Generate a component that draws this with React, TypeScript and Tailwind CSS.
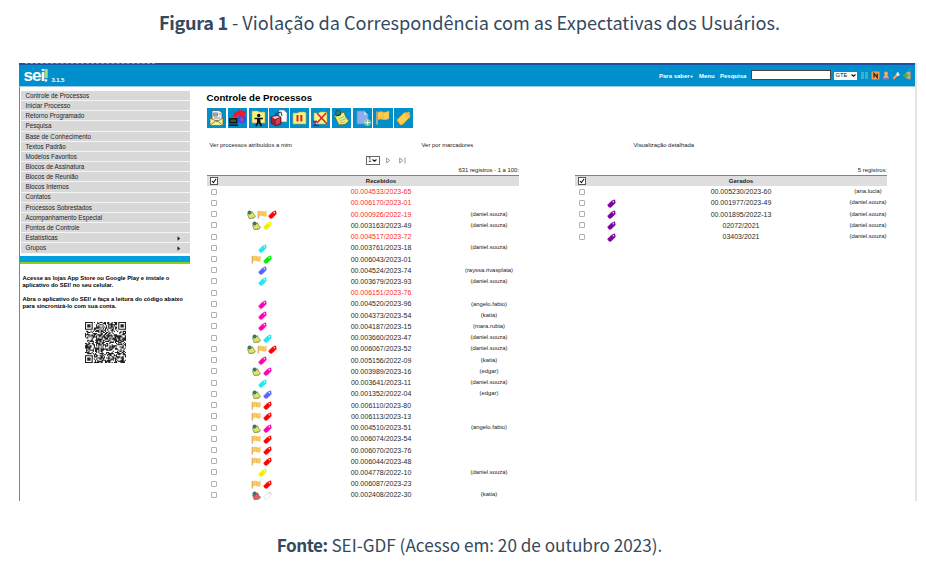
import React from "react";

type Row = { n: string; red?: boolean; icons?: string[]; user?: string };

const PINK = "#ff00b4";
const RED = "#ff0000";
const CYAN = "#22e6f2";
const BLUE = "#5a62ff";
const YELLOW = "#f4f000";
const GREEN = "#00f000";
const PURPLE = "#7d00a0";

const received: Row[] = [
  { n: "00.004533/2023-65", red: true },
  { n: "00.006170/2023-01", red: true },
  { n: "00.000926/2022-19", red: true, icons: ["note", "flag", RED], user: "daniel.souza" },
  { n: "00.003163/2023-49", icons: ["note", YELLOW], user: "daniel.souza" },
  { n: "00.004517/2023-72", red: true },
  { n: "00.003761/2023-18", icons: [CYAN], user: "daniel.souza" },
  { n: "00.006043/2023-01", icons: ["flag", GREEN] },
  { n: "00.004524/2023-74", icons: [BLUE], user: "rayssa.rivasplata" },
  { n: "00.003679/2023-93", icons: [CYAN], user: "daniel.souza" },
  { n: "00.006151/2023-76", red: true },
  { n: "00.004520/2023-96", icons: [PINK], user: "angelo.fabio" },
  { n: "00.004373/2023-54", icons: [PINK], user: "katia" },
  { n: "00.004187/2023-15", icons: [PINK], user: "mara.rubia" },
  { n: "00.003660/2023-47", icons: ["note", CYAN], user: "daniel.souza" },
  { n: "00.006067/2023-52", icons: ["note", "flag", RED], user: "daniel.souza" },
  { n: "00.005156/2022-09", icons: [PINK], user: "katia" },
  { n: "00.003989/2023-16", icons: ["note", PINK], user: "edgar" },
  { n: "00.003641/2023-11", icons: [CYAN], user: "daniel.souza" },
  { n: "00.001352/2022-04", icons: ["note", BLUE], user: "edgar" },
  { n: "00.006110/2023-80", icons: ["flag", RED] },
  { n: "00.006113/2023-13", icons: ["flag", RED] },
  { n: "00.004510/2023-51", icons: ["note", PINK], user: "angelo.fabio" },
  { n: "00.006074/2023-54", icons: ["flag", RED] },
  { n: "00.006070/2023-76", icons: ["flag", RED] },
  { n: "00.006044/2023-48", icons: ["flag", RED] },
  { n: "00.004778/2022-10", icons: [YELLOW], user: "daniel.souza" },
  { n: "00.006087/2023-23", icons: ["flag", RED] },
  { n: "00.002408/2022-30", icons: ["rednote", "#ffffff"], user: "katia" },
];

const generated: Row[] = [
  { n: "00.005230/2023-60", user: "ana.lucia" },
  { n: "00.001977/2023-49", icons: [PURPLE], user: "daniel.souza" },
  { n: "00.001895/2022-13", icons: [PURPLE], user: "daniel.souza" },
  { n: "02072/2021", icons: [PURPLE], user: "daniel.souza" },
  { n: "03403/2021", icons: [PURPLE], user: "daniel.souza" },
];

const menu = [
  "Controle de Processos", "Iniciar Processo", "Retorno Programado", "Pesquisa",
  "Base de Conhecimento", "Textos Padrão", "Modelos Favoritos", "Blocos de Assinatura",
  "Blocos de Reunião", "Blocos Internos", "Contatos", "Processos Sobrestados",
  "Acompanhamento Especial", "Pontos de Controle", "Estatísticas", "Grupos",
];

function RowIcon({ kind }: { kind: string }) {
  if (kind === "note" || kind === "rednote") {
    const fill = kind === "note" ? "#dbe66a" : "#e85a68";
    return (
      <svg className="h-[9px] w-[10.6px]" viewBox="0 0 21 18">
        <path d="m3 8 10-4.500q2 6 6 9l-3 3.500q-5 1.500-10 1Z" fill={fill} stroke="#66662c" strokeWidth="1.200" strokeLinejoin="round" />
        <path d="M9 15.500q5 .5 8-2" fill="none" stroke="#a5a53c" strokeWidth="1" />
        <ellipse cx="7" cy="5" rx="3.600" ry="3.400" fill="#3f7d68" stroke="#23493c" strokeWidth=".8" />
      </svg>
    );
  }
  if (kind === "flag") {
    return (
      <svg className="h-[9px] w-[10.6px]" viewBox="0 0 21 18">
        <path d="M2.500 2v15" stroke="#d9a55c" strokeWidth="2.500" />
        <path d="M3.500 3q4-2 8 0t7-1v9.500q-3 2-7 0t-8 1Z" fill="#fcce58" stroke="#ecb75a" />
        <path d="M11.500 3v9" stroke="#e8ad48" />
      </svg>
    );
  }
  const white = kind === "#ffffff";
  return (
    <svg className="h-[9px] w-[10.6px]" viewBox="0 0 21 18">
      <path d="M3 12 11 4l6.500-2.500L18.500 8 10 16.500H6Z" fill={kind} stroke={white ? "#c4c4c4" : kind} strokeLinejoin="round" />
      <circle cx="14.500" cy="5.500" r="1.500" fill="white" stroke={white ? "#c4c4c4" : "none"} />
    </svg>
  );
}

function Check({ on }: { on?: boolean }) {
  return on ? (
    <span className="flex h-[8px] w-[8.5px] items-center justify-center border border-[#555] bg-white">
      <svg className="h-[6px] w-[6px]" viewBox="0 0 6 6"><path d="m1 3 1.400 1.600L5 1" fill="none" stroke="#111" strokeWidth="1.100" /></svg>
    </span>
  ) : (
    <span className="h-[6px] w-[6.5px] rounded-[1px] border border-[#b0b0b0] bg-white" />
  );
}

function ProcessTable({ title, rows, right }: { title: string; rows: Row[]; right?: boolean }) {
  const cols = right ? "grid-cols-[15px_44px_215px_39px]" : "grid-cols-[15px_81px_157px_59px]";
  return (
    <div className="w-[312.5px]">
      <div className={`grid h-[11px] items-center border-t border-[#6c9a3c] bg-[#dedede] ${cols}`}>
        <span className="flex justify-center"><Check on /></span>
        <span />
        <b className="text-center text-[6px] leading-none text-[#222]">{title}</b>
        <span />
      </div>
      {rows.map((r) => (
        <div key={r.n} className={`grid h-[11.24px] items-center ${cols}`}>
          <span className="flex justify-center"><Check /></span>
          <span className="flex justify-center pt-px">{r.icons?.map((k) => <RowIcon key={k} kind={k} />)}</span>
          <span className={`text-center text-[7px] leading-none ${r.red ? "text-[#ff2a2a]" : "text-[#2a2a2a]"}`}>{r.n}</span>
          <span className="pt-[1px] text-center text-[5.9px] leading-none whitespace-nowrap text-[#1c1c1c]">{r.user ? `(${r.user})` : ""}</span>
        </div>
      ))}
    </div>
  );
}

const folder = <path d="M3 5h5l1-1h6l1 1v11H3Z" fill="#f7f283" stroke="#b6a93e" strokeWidth=".6" />;

const tools: React.ReactNode[] = [
  <g key="mail">
    <path d="M5 2.500h7l3 2V13H5Z" fill="#ececec" stroke="#555" strokeWidth=".7" />
    <path d="M6.500 5h4v3h-4ZM7 10h6M12 6h2" fill="#aaa" stroke="#777" strokeWidth=".7" />
    <path d="M3 10v7.500h13V10l-6 3.500Z" fill="#f5ed91" stroke="#6b6435" strokeWidth=".7" />
    <path d="m3 17.500 6-5h1l6 5" fill="none" stroke="#6b6435" strokeWidth=".7" />
  </g>,
  <g key="send">
    <circle cx="14" cy="11" r="4" fill="#4a43d6" /><path d="m11 11 3-3 2 4-2 3Z" fill="#8a46c8" />
    <path d="M1 10h8.500v5.500H1ZM1 16.500h9V18H1Z" fill="#151515" /><path d="M2.500 11.500H8V14H2.500Z" fill="#3d5a28" />
    <path d="M5 9q0-5 6-6l-1-1.500 8 2-3 6.500-1.500-3q-4 0-5 2Z" fill="#f41624" />
  </g>,
  <g key="user">
    <path d="M3 3h6l1 1h6v11H3Z" fill="#f7f283" stroke="#b6a93e" strokeWidth=".6" />
    <circle cx="9.700" cy="7.500" r="1.700" fill="#111" />
    <path d="M5.500 10.500h8.500M9.700 10v3.500M9.700 13 7 18M9.700 13l2.800 5" stroke="#111" strokeWidth="1.700" />
    <path d="M8 10h3.400v4H8Z" fill="#111" />
  </g>,
  <g key="book">
    <path d="M10 2h5l3 3v9h-8Z" fill="#fff" stroke="#777" strokeWidth=".6" />
    <path d="m2 9 6-2 4 2v7l-5 2-5-3Z" fill="#9f2035" stroke="#5b1020" strokeWidth=".7" />
    <path d="m3 9 5-1 3 1-5 2Z" fill="#f1c9c9" /><path d="m7 12 4-2v5l-4 2Z" fill="#d23f52" /><path d="m6 6 6-2 1 4" fill="none" stroke="#333" />
  </g>,
  <g key="pause">{folder}<path d="M7.500 7v6.500M11.300 7v6.500" stroke="#e3201a" strokeWidth="2" /></g>,
  <g key="remove">{folder}<path d="m6 5 10 11M15 5 6 15" stroke="#d3202b" strokeWidth="1.400" /><path d="M2 13.500h4M2 17.500h6M4 13.500v4" stroke="#4030a0" strokeWidth="1.500" /></g>,
  <g key="note">
    <path d="m2.500 8 9.500-4q1 5 5 9l-4 3.500-6 .5Z" fill="#e5ef7d" stroke="#62672e" strokeWidth=".8" strokeLinejoin="round" />
    <path d="m7 11 5-2.500M8 13l6-2.500M8 15l5-1" stroke="#a1a650" strokeWidth=".7" />
    <ellipse cx="6" cy="5" rx="2.500" ry="2.800" fill="#2c8177" stroke="#174d49" strokeWidth=".9" /><path d="m4 8 5-1.500" stroke="#173e38" />
  </g>,
  <g key="doc">
    <path d="M4 3h7l4 4v9H4Z" fill="#8caee9" stroke="#638bd0" strokeWidth=".7" /><path d="M11 3v4h4" fill="#c3d6f5" />
    <circle cx="14.500" cy="14.500" r="3" fill="#67c66b" stroke="#fff" strokeWidth=".4" /><path d="M14.500 12.500v4M12.500 14.500h4" stroke="#fff" />
  </g>,
  <g key="flag">
    <path d="M4 3.500v13" stroke="#e6b069" strokeWidth="1.500" /><path d="M5 4.500q3-1.500 5-.5t6-1v7.500q-3 2-6 1t-5 .5Z" fill="#fccf4d" stroke="#e9a733" strokeWidth=".5" />
    <path d="M10 4v7" stroke="#eab449" />
  </g>,
  <g key="tag"><path d="m2.800 12 7-7 5.700-1 .500 5-7.500 7.500-2 .5Z" fill="#ffcf4b" stroke="#e3a02b" strokeWidth=".6" /><circle cx="13.400" cy="6.200" r="1" fill="#fff" stroke="#ad782c" strokeWidth=".6" /></g>,
];

function finder(x: number, y: number, ox: number, oy: number) {
  const a = x - ox;
  const b = y - oy;
  if (a < -1 || b < -1 || a > 7 || b > 7) return null;
  if (a < 0 || b < 0 || a > 6 || b > 6) return false;
  return a === 0 || b === 0 || a === 6 || b === 6 || (a > 1 && a < 5 && b > 1 && b < 5);
}

function QrCode() {
  const N = 37;
  let d = "";
  let seed = 91;
  for (let y = 0; y < N; y++) {
    for (let x = 0; x < N; x++) {
      seed = (seed * 1103515245 + 12345) % 2147483648;
      const f = finder(x, y, 0, 0) ?? finder(x, y, N - 7, 0) ?? finder(x, y, 0, N - 7);
      if (f ?? seed / 2147483648 > 0.47) d += `M${x} ${y}h1v1h-1z`;
    }
  }
  return <svg className="size-[41px]" viewBox="0 0 37 37"><path d={d} fill="#222" /></svg>;
}

function Select({ label, className }: { label: string; className: string }) {
  return (
    <span className={`flex shrink-0 items-center justify-between bg-white px-[1.500px] leading-none text-[#222] ${className}`}>
      {label}
      <svg className="h-[3px] w-[5px]" viewBox="0 0 5 3"><path d="m.5.5 2 1.700 2-1.700" fill="none" stroke="#111" strokeWidth="1.100" /></svg>
    </span>
  );
}

function TopBar() {
  return (
    <header className="h-[24px] border-b border-[#9fc9df] bg-[#008fcd]">
      <div className="h-[2px] bg-[#1d4fa3]"><div className="ml-[6px] w-[130px] border-t border-dashed border-[#7d97c8]" /></div>
      <div className="flex h-[21px] items-center text-white">
        <span className="ml-[4.500px] flex w-[28px] items-start">
          <b className="text-[17px] leading-[19px] font-bold tracking-[-0.9px]">sei</b>
          <svg className="mt-[3px] h-[13px] w-[4px]" viewBox="0 0 4 13"><path d="M.5 0h3.200v9H.5Z" fill="#a5dc8c" /><path d="M.8 10.300h2.400v2.200H.8Z" fill="#fff" /></svg>
        </span>
        <b className="mt-[9px] text-[6px] leading-none tracking-[-0.100px]">3.1.5</b>
        <nav className="ml-auto flex items-center gap-[4px] pt-px text-[6px] leading-none font-bold">
          <span className="w-[36px] whitespace-nowrap">Para saber+</span>
          <span className="w-[17px]">Menu</span>
          <span className="w-[28px]">Pesquisa</span>
        </nav>
        <span className="mb-[2px] ml-[3px] h-[10px] w-[80px] border border-[#444] bg-white" />
        <Select label="GTE" className="ml-[3px] h-[8px] w-[23px] text-[5.800px]" />
        <span className="mr-[4px] ml-[3px] flex items-center gap-[1.500px]">
          <svg className="size-[9px]" viewBox="0 0 9 9"><path d="M1 1h3v7H1ZM5 1h3v7H5Z" fill="#39b0cf" /></svg>
          <svg className="size-[9px]" viewBox="0 0 9 9"><rect x=".5" y=".5" width="8" height="8" rx="1" fill="#f19b52" /><path d="M3 6.500v-4l3.200 4v-4" fill="none" stroke="#222" strokeWidth="1.200" /></svg>
          <svg className="size-[9px]" viewBox="0 0 9 9"><circle cx="5" cy="2.500" r="1.900" fill="#f3b54b" /><path d="M2 7q1-3 3-3t3 3l-1 1H3Z" fill="#e8c088" /><path d="M1.500 6.500H8V8.500H1.500Z" fill="#8376c8" /></svg>
          <svg className="size-[9px]" viewBox="0 0 9 9"><path d="m1.300 7.700 4-4" stroke="#f3a35f" strokeWidth="2.200" /><path d="M4.500 4V2l2-1.500v2L8 3.300 6.500 5H5Z" fill="#f2eee5" /></svg>
          <svg className="size-[9px]" viewBox="0 0 9 9"><path d="M4.500 1 8.500.5v8l-4-1Z" fill="#d2ab63" /><path d="m.8 4.500 3.200-3v2h2.500v2H4v2Z" fill="#54a844" /></svg>
        </span>
      </div>
    </header>
  );
}

function Sidebar() {
  return (
    <aside className="w-[170.5px] shrink-0 border-l border-[#2d9fd0] text-[#222]">
      <ul className="pt-[4px] pl-px">
        {menu.map((m, i) => (
          <li key={m} className="flex h-[10.17px] items-center justify-between border-b border-[#f4f4f4] bg-[#d8d8d8] pt-[1px] pr-[9px] pl-[4.500px] text-[6.3px] leading-none">
            {m}
            {i > 13 && <svg className="h-[5px] w-[4px]" viewBox="0 0 4 5"><path d="M.5.300 3.200 2.500.5 4.700Z" fill="#222" /></svg>}
          </li>
        ))}
      </ul>
      <div className="mt-[2.300px] h-[8px] border-b-2 border-[#8bce1f] bg-[#00a0dd]" />
      <div className="pt-[11px] pl-[2.500px] text-[5.83px] leading-[7px] font-bold whitespace-nowrap text-black">
        <p>Acesse as lojas App Store ou Google Play e instale o<br />aplicativo do SEI! no seu celular.</p>
        <p className="mt-[7px]">Abra o aplicativo do SEI! e faça a leitura do código abaixo<br />para sincronizá-lo com sua conta.</p>
      </div>
      <div className="mt-[12px] ml-[65px]"><QrCode /></div>
    </aside>
  );
}

export default function App() {
  return (
    <main className="h-[569px] w-[926px] overflow-hidden bg-white font-['Liberation_Sans',Arial,sans-serif]">
      <h2 className="flex h-[63px] justify-center pt-[8px] pl-[13px] font-['Noto_Sans_CJK_SC',sans-serif] text-[18.15px] leading-[29px] whitespace-pre text-[#34495e]">
        <b className="tracking-[-0.300px]">Figura 1</b> - Violação da Correspondência com as Expectativas dos Usuários.
      </h2>
      <section className="ml-[19px] h-[438px] w-[898px] overflow-hidden border-r-2 border-[#e4e4e4]">
        <TopBar />
        <div className="flex">
          <Sidebar />
          <div className="ml-[17px] w-[690px]">
            <h1 className="h-[21px] pt-[5px] text-[9.7px] leading-[12px] font-bold text-black">Controle de Processos</h1>
            <div className="flex gap-[1.500px] pl-[0.500px]">
              {tools.map((t, i) => (
                <span key={i} className="h-[20px] w-[19.3px] bg-[#008fcd]"><svg className="h-[20px] w-[19.3px]" viewBox="0 0 19.300 20" fill="none">{t}</svg></span>
              ))}
            </div>
            <div className="flex h-[26px] pt-[13.500px] pl-[3px] text-[5.900px] leading-[7px] text-[#222]">
              <span className="w-[212px]">Ver processos atribuídos a mim</span>
              <span className="w-[212px]">Ver por marcadores</span>
              <span>Visualização detalhada</span>
            </div>
            <div className="flex h-[12px] items-center pl-[159px]">
              <Select label="1" className="h-[9px] w-[14px] border border-[#666] text-[6.500px]" />
              <svg className="ml-[6px] h-[7px] w-[5px]" viewBox="0 0 5 7"><path d="M.7 1v5l3-2.500Z" fill="none" stroke="#999" /></svg>
              <svg className="ml-[8px] h-[7px] w-[7px]" viewBox="0 0 7 7"><path d="M.7 1v5l3-2.500ZM6 .5v6" fill="none" stroke="#999" /></svg>
            </div>
            <div className="flex h-[9px] items-end pb-[1px] text-[5.900px] leading-[7px] text-[#222]">
              <span className="w-[312.5px] text-right">631 registros - 1 a 100:</span>
              <span className="w-[368px] text-right">5 registros:</span>
            </div>
            <div className="flex items-start gap-[55.5px]">
              <ProcessTable title="Recebidos" rows={received} />
              <ProcessTable title="Gerados" rows={generated} right />
            </div>
          </div>
        </div>
      </section>
      <p className="flex justify-center pt-[29px] pl-[13px] font-['Noto_Sans_CJK_SC',sans-serif] text-[17.15px] leading-[29px] whitespace-pre text-[#34495e]">
        <b className="tracking-[-0.500px]">Fonte:</b> SEI-GDF (Acesso em: 20 de outubro 2023).
      </p>
    </main>
  );
}
